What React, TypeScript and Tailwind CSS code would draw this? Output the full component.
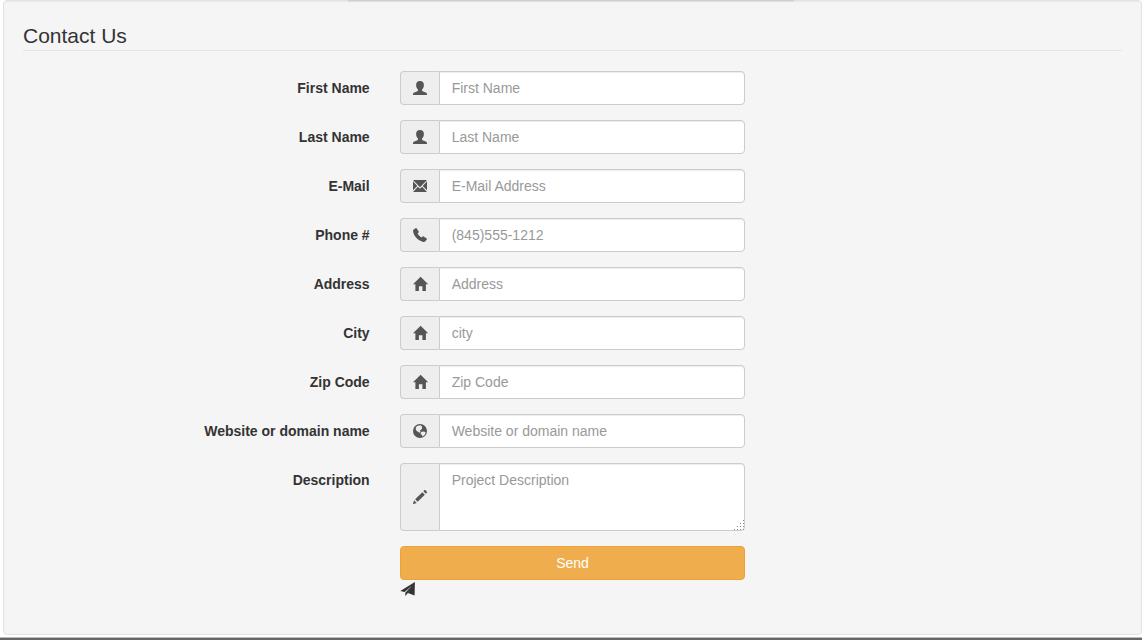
import type { ReactNode } from "react";

type IconName = "user" | "envelope" | "phone" | "home" | "globe" | "pencil" | "send";

interface Field {
  id: string;
  label: string;
  placeholder: string;
  icon: IconName;
  type?: string;
}

const FIELDS: Field[] = [
  { id: "first_name", label: "First Name", placeholder: "First Name", icon: "user" },
  { id: "last_name", label: "Last Name", placeholder: "Last Name", icon: "user" },
  { id: "email", label: "E-Mail", placeholder: "E-Mail Address", icon: "envelope", type: "email" },
  { id: "phone", label: "Phone #", placeholder: "(845)555-1212", icon: "phone", type: "tel" },
  { id: "address", label: "Address", placeholder: "Address", icon: "home" },
  { id: "city", label: "City", placeholder: "city", icon: "home" },
  { id: "zip", label: "Zip Code", placeholder: "Zip Code", icon: "home" },
  { id: "website", label: "Website or domain name", placeholder: "Website or domain name", icon: "globe" },
];

// all drawn on a 14 x 14 grid
const ICONS: Record<IconName, ReactNode> = {
  user: (
    <path d="M7 0c2.500 0 3.900 1.500 3.900 3.900 0 1.900-.8 3.600-1.900 4.600v.8c0 .6.4.9 1.100 1.200l2.600 1c1 .4 1.300 1.100 1.300 2.500H0c0-1.400.3-2.100 1.300-2.500l2.600-1c.7-.3 1.100-.6 1.100-1.200v-.8C3.900 7.500 3.100 5.800 3.100 3.900 3.100 1.500 4.500 0 7 0z" />
  ),
  envelope: (
    <path d="M0 1h14L7 8.200zM0 2.300L4.300 6.900 0 11.300zM14 2.300v9L9.700 6.900zM0 13L4.900 7.700 7 9.800l2.100-2.100L14 13z" />
  ),
  phone: (
    <path d="M.7 1.600L2.600.2c.3-.2.700-.2.900.1l2.200 3.300c.2.3.1.700-.1.900L4.600 5.500c.9 1.800 2.200 3.100 4 4l1-1c.3-.3.7-.3 1-.1l3.100 2.200c.3.2.4.6.1.900l-1.400 1.800c-.5.600-1.300.8-2.200.6C5.500 12.900 1 8.400.1 3.800-.1 2.900.1 2.100.7 1.600z" />
  ),
  home: <path d="M0 7.300L7.600-.3 15.200 7.300h-2.300v6.700H9.400V9.300H5.900V14H2.400V7.300z" />,
  globe: (
    <path
      fillRule="evenodd"
      d="M7 0a7 7 0 1 1 0 14A7 7 0 0 1 7 0zM6.200 1.400L4 2.100 2.700 3.700l.2 2.100 1 1.500 1.500.4.8 1.200 1.200-1.100-.3-1.500 1.300-.9.8-1.500-.4-1.700L7.700 1.300zM8.600 7.700L7.500 9.100l.3 1.200 1.300.6.2 1.600 1.500-.7 1.500-1.900.3-1.500-1.500-.9z"
    />
  ),
  pencil: (
    <path
      transform="scale(0.011667 -0.011667) translate(0 -1200)"
      d="M1011 1210q19 0 33 -13l153 -153q13 -14 13 -33t-13 -33l-99 -92l-214 214l95 96q13 14 32 14zM1013 800l-615 -614l-214 214l614 614zM317 96l-333 -112l110 335z"
    />
  ),
  send: <path d="M14.900 0L.3 9l4.300 1.100L12.200 3.500 5.300 10.700v3.200l2.200-2.300zM14.900.1L7.900 11l6.700 2.400z" />,
};

function Icon({ name }: { name: IconName }) {
  return (
    <svg className="inline-block size-3.5 overflow-visible fill-current" viewBox="0 0 14 14" aria-hidden="true">
      {ICONS[name]}
    </svg>
  );
}

function FormGroup({ id, label, icon, children }: { id: string; label: string; icon: IconName; children: ReactNode }) {
  return (
    <div className="mb-[15px] grid grid-cols-3">
      <label htmlFor={id} className="px-[15px] pt-[7px] text-right font-bold">
        {label}
      </label>
      <div className="px-[15px]">
        <div className="flex">
          <span className="flex w-[39px] shrink-0 items-center rounded-l border border-r-0 border-[#ccc] bg-[#eee] px-3 text-[#555]">
            <Icon name={icon} />
          </span>
          {children}
        </div>
      </div>
    </div>
  );
}

const CONTROL =
  "block w-full min-w-0 rounded-r border border-[#ccc] bg-white px-3 py-1.5 text-[#555] shadow-[inset_0_1px_1px_rgba(0,0,0,0.075)] outline-none placeholder:text-[#999] focus:border-[#66afe9]";

const GRIP_DOTS = [
  [9, 0],
  [6, 3], [9, 3],
  [3, 6], [6, 6], [9, 6],
  [0, 9], [3, 9], [6, 9], [9, 9],
];

export default function App() {
  return (
    <div className="relative border-b-2 border-[#666] bg-white font-['Liberation_Sans',Arial,sans-serif] text-sm/5 text-[#333]">
      <div className="absolute inset-x-[348px] top-0 h-0.5 bg-linear-to-b from-[#c8c8c8] to-[#e6e6e6]" />
      <div className="border-b border-[#bbb] pb-0.5 pl-[3px]">
        <form
          className="rounded border border-[#e3e3e3] bg-[#f5f5f5] p-[19px] shadow-[inset_0_1px_1px_rgba(0,0,0,0.05)]"
          onSubmit={(e) => e.preventDefault()}
        >
          <fieldset>
            <legend className="mb-5 block w-full border-b border-[#e5e5e5] pt-0.5 text-[21px]/7">Contact Us</legend>

            <div className="-mx-3.5">
              {FIELDS.map((field) => (
                <FormGroup key={field.id} id={field.id} label={field.label} icon={field.icon}>
                  <input
                    id={field.id}
                    name={field.id}
                    type={field.type ?? "text"}
                    placeholder={field.placeholder}
                    className={CONTROL}
                  />
                </FormGroup>
              ))}

              <FormGroup id="comment" label="Description" icon="pencil">
                <div className="relative w-full">
                  <textarea
                    id="comment"
                    name="comment"
                    placeholder="Project Description"
                    className={`${CONTROL} h-[68px] resize-none`}
                  />
                  <svg className="pointer-events-none absolute right-px bottom-px size-2.5" viewBox="0 0 10 10">
                    {GRIP_DOTS.map(([x, y]) => (
                      <rect key={`${x}-${y}`} x={x} y={y} width="1" height="1" fill="#888" />
                    ))}
                  </svg>
                </div>
              </FormGroup>

              <div className="mb-[15px] grid grid-cols-3">
                <div className="col-start-2 px-[15px]">
                  <button
                    type="submit"
                    className="block w-full cursor-pointer rounded border border-[#eea236] bg-[#f0ad4e] px-3 py-1.5 text-center text-white hover:bg-[#ec971f]"
                  >
                    Send
                  </button>
                  <div className="flex h-5 items-start pt-0.5">
                    <Icon name="send" />
                  </div>
                </div>
              </div>
            </div>
          </fieldset>
        </form>
      </div>
    </div>
  );
}
